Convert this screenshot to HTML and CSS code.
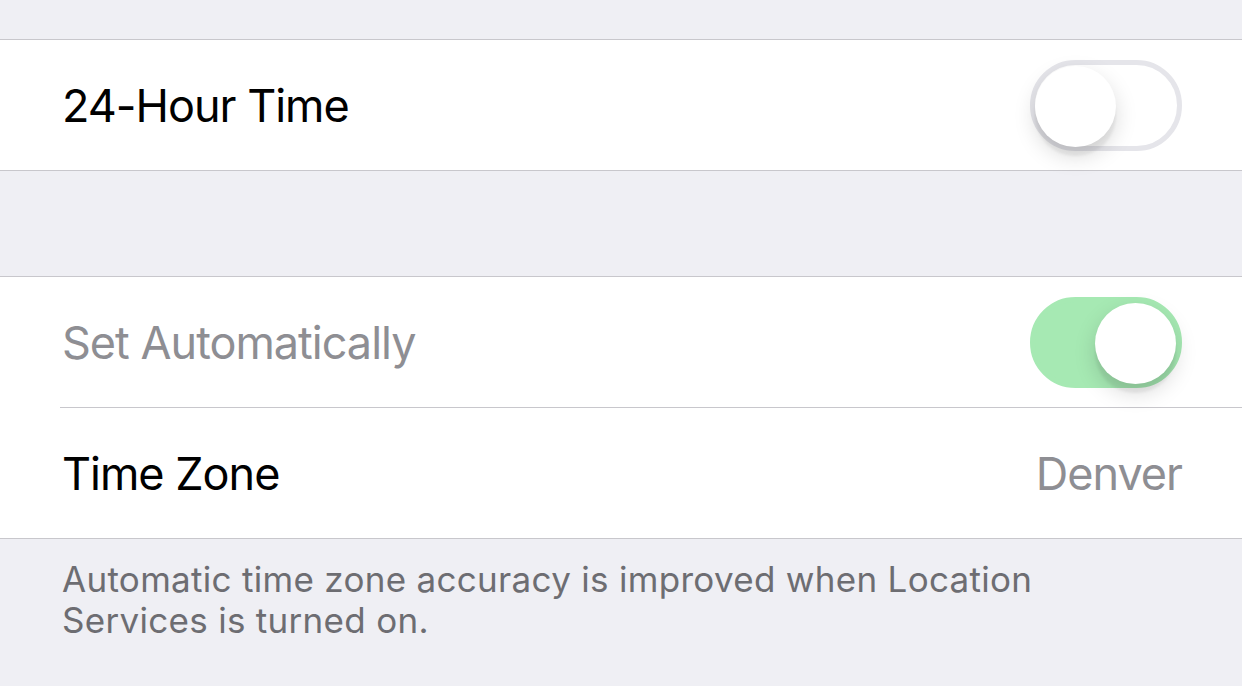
FILE: index.html
```html
<!DOCTYPE html>
<html lang="en">
  <head>
    <meta charset="UTF-8" />
    <title>Date &amp; Time</title>
    <link rel="stylesheet" href="styles.css">
  </head>
  <body>
    <div class="top-space"></div>

    <!-- 24-hour group -->
    <div class="group">
      <div class="row">
        <div class="row-body">
          <span class="label">24-Hour Time</span>
          <div class="switch">
            <div class="knob"></div>
          </div>
        </div>
      </div>
    </div>

    <div class="group-gap"></div>

    <!-- automatic time group -->
    <div class="group">
      <div class="row">
        <div class="row-body">
          <span class="label disabled">Set Automatically</span>
          <div class="switch on">
            <div class="knob"></div>
          </div>
        </div>
      </div>
      <div class="row">
        <div class="row-body">
          <span class="label">Time Zone</span>
          <span class="value">Denver</span>
        </div>
      </div>
    </div>

    <p class="footer">Automatic time zone accuracy is improved when Location Services is turned on.</p>
  </body>
</html>
```

FILE: styles.css
```css
body {
  margin: 0;
  background-color: #efeff4;
  font-family: Inter, "Noto Sans", sans-serif;
  -webkit-font-smoothing: antialiased;
}

.top-space {
  height: 39px;
}

.group {
  background-color: white;
  border-top: 1px solid #c8c7cc;
  border-bottom: 1px solid #c8c7cc;
}

.group-gap {
  height: 105px;
}

.row {
  padding-left: 60px;
}

.row-body {
  display: flex;
  align-items: center;
  justify-content: space-between;
  height: 130px;
  padding-right: 60px;
}

.row + .row .row-body {
  border-top: 1px solid #c8c7cc;
}

.label {
  font-size: 45px;
  letter-spacing: -1px;
  color: #000;
  padding-left: 2px;
}

.label.disabled {
  color: #8e8e93;
}

.value {
  font-size: 45px;
  letter-spacing: -1px;
  color: #8e8e93;
}

.switch {
  position: relative;
  width: 152px;
  height: 91px;
  border-radius: 46px;
  box-sizing: border-box;
  border: 5px solid #e5e5ea;
  background-color: white;
}

.switch.on {
  border-color: #a6e9b3;
  background-color: #a6e9b3;
}

.knob {
  position: absolute;
  top: 1px;
  left: 0;
  width: 81px;
  height: 81px;
  border-radius: 50%;
  background-color: white;
  box-shadow: 0 9px 22px rgba(0, 0, 0, 0.15), 0 9px 3px rgba(0, 0, 0, 0.06);
}

.switch.on .knob {
  left: auto;
  right: 1px;
}

.footer {
  margin: 0;
  padding: 20px 100px 0 62px;
  font-size: 35px;
  letter-spacing: 0.3px;
  line-height: 41px;
  color: #6d6d72;
}
```
